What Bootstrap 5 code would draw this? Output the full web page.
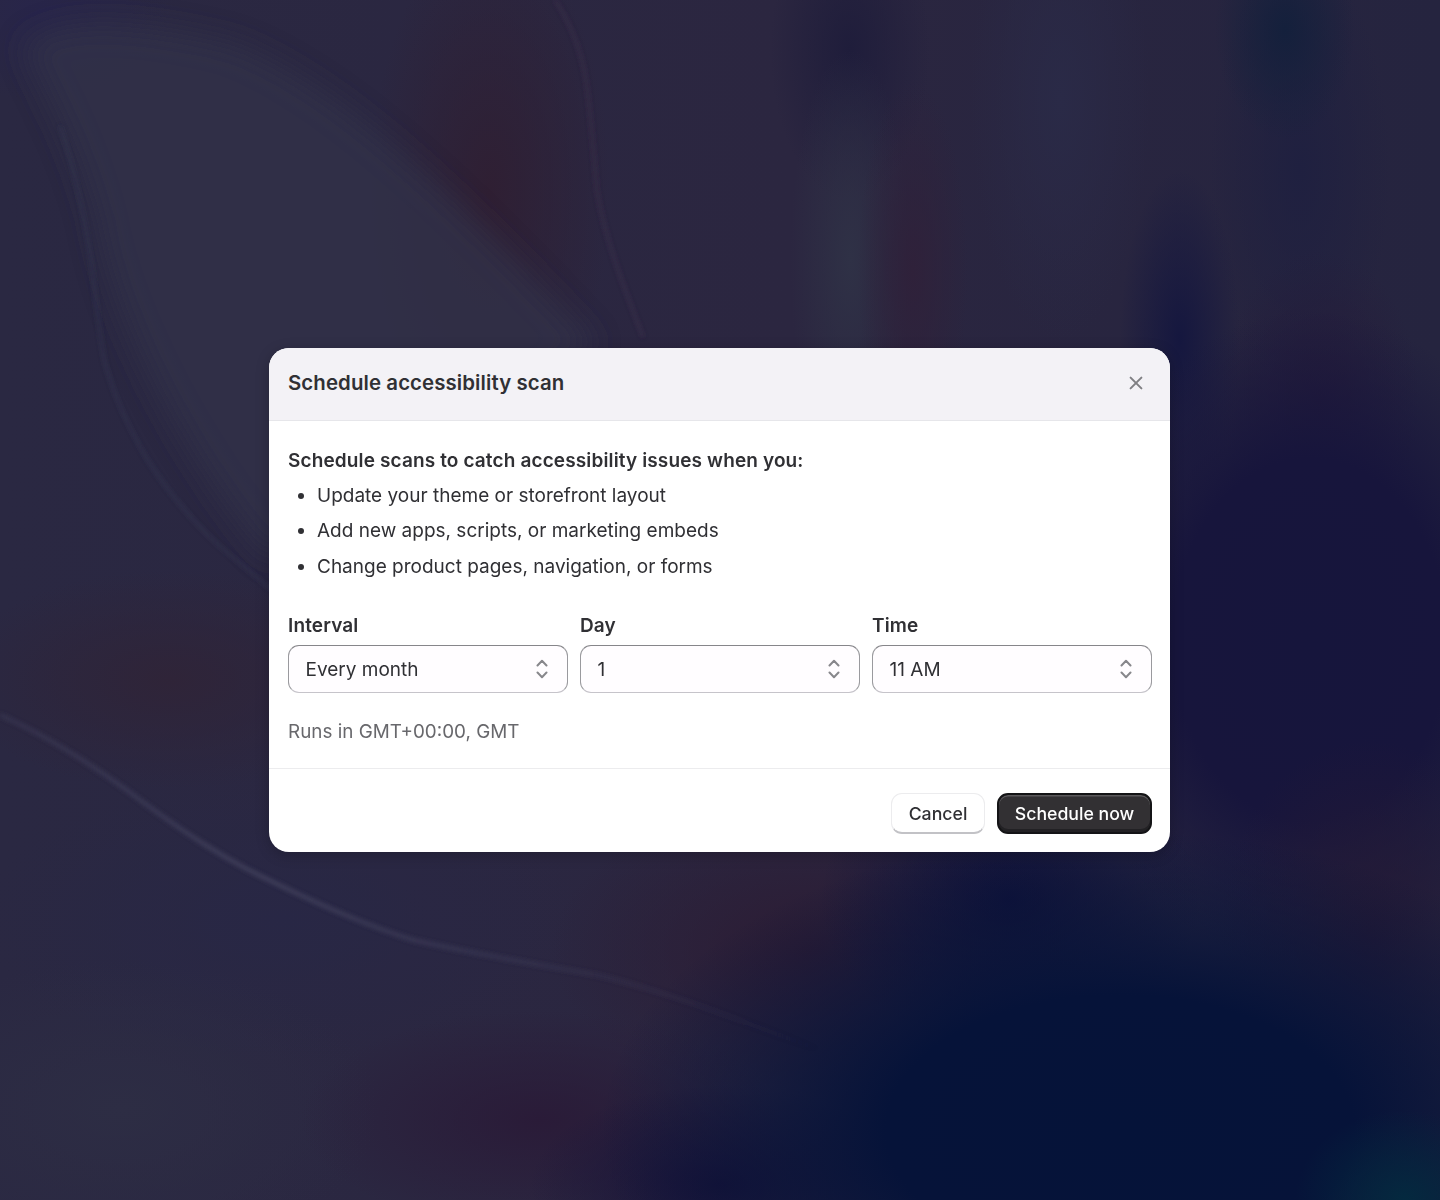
<!DOCTYPE html>
<html lang="en">
<head>
<meta charset="utf-8">
<title>Schedule accessibility scan</title>
<link href="https://cdn.jsdelivr.net/npm/bootstrap@5.3.0/dist/css/bootstrap.min.css" rel="stylesheet">
<style>
html,body{height:100%}
body{font-family:Inter,"Liberation Sans",sans-serif;color:#303034;position:relative;overflow:hidden;
background-color:#2a2740;
background-image:
 radial-gradient(ellipse 110px 90px at 1405px 1200px,#04293f 0,transparent 100%),
 radial-gradient(ellipse 520px 300px at 1120px 1130px,#051339 0,#061339 45%,transparent 100%),
 radial-gradient(ellipse 190px 100px at 720px 1185px,#161238 0,transparent 100%),
 radial-gradient(ellipse 190px 150px at 1010px 900px,#10123a 0,transparent 100%),
 radial-gradient(ellipse 150px 190px at 1370px 930px,#241a36 0,transparent 100%),
 radial-gradient(ellipse 240px 110px at 540px 1120px,#2a1b38 0,transparent 100%),
 radial-gradient(ellipse 260px 150px at 810px 950px,#2c1c34 0,transparent 100%),
 radial-gradient(ellipse 260px 150px at 120px 1110px,#2d2d44 0,transparent 100%),
 radial-gradient(ellipse 300px 140px at 280px 920px,#282745 0,transparent 100%),
 radial-gradient(ellipse 220px 110px at 170px 680px,#2f2438 0,transparent 100%),
 radial-gradient(ellipse 250px 330px at 1310px 640px,#16153c 0,#17153c 55%,transparent 100%),
 radial-gradient(ellipse 100px 150px at 1320px 400px,#241b3a 0,transparent 100%),
 radial-gradient(ellipse 60px 170px at 1180px 340px,#15173f 0,transparent 100%),
 radial-gradient(ellipse 70px 110px at 1285px 30px,#14203c 0,transparent 100%),
 radial-gradient(ellipse 90px 220px at 1300px 170px,#1f2040 0,transparent 100%),
 radial-gradient(ellipse 55px 190px at 913px 270px,#2f213a 0,transparent 100%),
 radial-gradient(ellipse 60px 210px at 850px 260px,#2f3146 0,transparent 100%),
 radial-gradient(ellipse 80px 150px at 850px 50px,#1f1d3b 0,transparent 100%),
 radial-gradient(ellipse 90px 240px at 1060px 100px,#2a2a47 0,transparent 100%),
 radial-gradient(ellipse 120px 260px at 490px 190px,#2f1f33 0,transparent 100%),
 radial-gradient(ellipse 130px 90px at 40px 10px,#28254a 0,transparent 100%),
 linear-gradient(90deg,#2a2842 0,#2b2640 55%,#25243f 100%);
}
.bgart{position:absolute;inset:0;width:100%;height:100%;z-index:0}
.stage{position:relative;z-index:1;height:1200px;padding-right:1px}
.scan-modal{width:901px;height:504px;border-radius:20px;overflow:hidden;background:#fff;box-shadow:0 3px 14px rgba(0,0,0,.22)}
.scan-head{height:73px;background:#f3f2f6;border-bottom:1px solid #e6e6ea;padding:0 20px 2px 19px}
.scan-title{font-size:20.4px;line-height:28px;font-weight:600;margin:0;color:#303034;letter-spacing:.1px}
.scan-close{width:28px;height:28px;border:0;background:transparent;padding:0}
.scan-body{padding:25px 18px 0 19px;height:348px;border-bottom:1px solid #ececee}
.scan-lead{font-size:19px;line-height:30px;font-weight:600;margin:0;color:#303034;letter-spacing:.13px}
.scan-list{margin:1.5px 0 0;padding-left:29px;font-size:19px;line-height:35.5px;color:#303034}
.scan-fields{--bs-gutter-x:12px;margin-top:28.5px}
.scan-label{font-size:19px;line-height:26px;font-weight:600;margin:0 0 6.5px;color:#303034;letter-spacing:.13px}
.scan-select{height:48px;border:1px solid #9a9a9e;border-top-color:#86868a;border-bottom-color:#c6c4ca;border-radius:11px;font-size:19px;line-height:26px;color:#303034;padding:1px 40px 0 16.5px;background-color:#fffdff;background-image:url("data:image/svg+xml,%3Csvg xmlns='http://www.w3.org/2000/svg' viewBox='0 0 12 20'%3E%3Cpath d='M1.5 6.5 6 1.8l4.5 4.7M1.5 13.5 6 18.2l4.5-4.7' fill='none' stroke='%2387878b' stroke-width='2' stroke-linecap='round' stroke-linejoin='round'/%3E%3C/svg%3E");background-size:12px 20px;background-position:right 19px center}
.scan-hint{font-size:18.85px;line-height:26px;color:#68686c;margin:26px 0 0}
.scan-foot{height:83px;padding:24px 18px 0 0;gap:12px}
.btn.scan-cancel,.btn.scan-go{height:41px;border-radius:11px;font-size:17.7px;line-height:26px;font-weight:500;padding:0;display:flex;align-items:center;justify-content:center}
.btn.scan-cancel{width:94px;background:#fff;border:1px solid #ececee;border-bottom:2px solid #c2c2c6;color:#303034;padding-top:1px}
.btn.scan-go{width:155px;background:#323033;border:2px solid #141416;color:#fff;box-shadow:inset 0 1.5px 0 rgba(255,255,255,.2),inset 0 -3px 0 #222124}
</style>
</head>
<body>
<svg class="bgart" viewBox="0 0 1440 1200" preserveAspectRatio="none" aria-hidden="true">
  <defs>
    <filter id="soft" x="-20%" y="-20%" width="140%" height="140%"><feGaussianBlur stdDeviation="14"/></filter>
    <filter id="thin" x="-5%" y="-5%" width="110%" height="110%"><feGaussianBlur stdDeviation="2"/></filter>
    <linearGradient id="fade" gradientUnits="userSpaceOnUse" x1="0" y1="715" x2="820" y2="1050">
      <stop offset="0" stop-color="#3f3e5a" stop-opacity=".55"/>
      <stop offset=".35" stop-color="#45445f" stop-opacity=".9"/>
      <stop offset=".7" stop-color="#3f3e5a" stop-opacity=".4"/>
      <stop offset="1" stop-color="#3f3e5a" stop-opacity="0"/>
    </linearGradient>
  </defs>
  <path filter="url(#soft)" d="M23 46 C50 20 115 15 230 42 C340 80 470 210 597 345 L270 560 C190 470 110 320 95 220 C70 130 40 90 23 46Z" fill="#30324a" opacity=".75"/>
  <g filter="url(#thin)" fill="none">
    <path d="M0 715 C45 735 85 760 128 791 C180 830 225 860 275 883 C320 905 365 925 413 940 C480 955 540 965 597 975 C680 995 750 1025 820 1050" stroke="url(#fade)" stroke-width="4"/>
    <path d="M60 126 C75 170 85 220 92 268 C97 310 100 340 105 363 C115 400 130 430 147 459 C170 495 200 530 230 555 L290 605" stroke="#3a3d58" stroke-width="2.5" opacity=".5"/>
    <path d="M555 0 C575 30 585 65 588 96 C592 130 594 160 597 191 C605 240 625 290 643 337" stroke="#453050" stroke-width="3" opacity=".45"/>
  </g>
</svg>

<main class="stage d-flex align-items-center justify-content-center">
  <div class="scan-modal d-flex flex-column" role="dialog" aria-labelledby="scanTitle">
    <div class="scan-head d-flex align-items-center justify-content-between">
      <h2 class="scan-title" id="scanTitle">Schedule accessibility scan</h2>
      <button type="button" class="scan-close d-flex align-items-center justify-content-center" aria-label="Close">
        <svg width="14" height="14" viewBox="0 0 14 14"><path d="M1.6 1.6 12.4 12.4M12.4 1.6 1.6 12.4" stroke="#7f7f83" stroke-width="2" stroke-linecap="round" fill="none"/></svg>
      </button>
    </div>
    <div class="scan-body">
      <p class="scan-lead">Schedule scans to catch accessibility issues when you:</p>
      <ul class="scan-list">
        <li>Update your theme or storefront layout</li>
        <li>Add new apps, scripts, or marketing embeds</li>
        <li>Change product pages, navigation, or forms</li>
      </ul>
      <div class="row scan-fields">
        <div class="col-4">
          <label class="scan-label d-block" for="fInterval">Interval</label>
          <select class="form-select scan-select" id="fInterval"><option>Every month</option></select>
        </div>
        <div class="col-4">
          <label class="scan-label d-block" for="fDay">Day</label>
          <select class="form-select scan-select" id="fDay"><option>1</option></select>
        </div>
        <div class="col-4">
          <label class="scan-label d-block" for="fTime">Time</label>
          <select class="form-select scan-select" id="fTime"><option>11 AM</option></select>
        </div>
      </div>
      <p class="scan-hint">Runs in GMT+00:00, GMT</p>
    </div>
    <div class="scan-foot d-flex align-items-start justify-content-end">
      <button type="button" class="btn scan-cancel">Cancel</button>
      <button type="button" class="btn scan-go">Schedule now</button>
    </div>
  </div>
</main>
<script src="https://cdn.jsdelivr.net/npm/bootstrap@5.3.0/dist/js/bootstrap.bundle.min.js"></script>
</body>
</html>
